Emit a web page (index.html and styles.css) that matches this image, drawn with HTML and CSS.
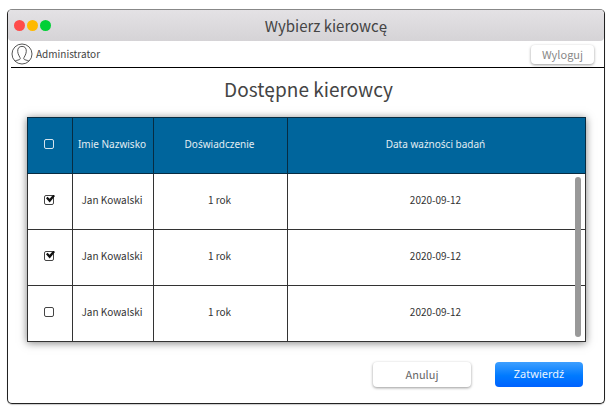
FILE: index.html
```html
<!DOCTYPE html>
<html lang="pl">
<head>
<meta charset="utf-8">
<title>Wybierz kierowcę</title>
<link rel="stylesheet" href="styles.css">
</head>
<body>
<div class="window">
  <header class="titlebar">
    <div class="lights"><span class="light red"></span><span class="light yellow"></span><span class="light green"></span></div>
    <div class="window-title">Wybierz kierowcę</div>
  </header>
  <div class="userbar">
    <div class="user">
      <svg class="avatar" viewBox="0 0 22 22" aria-hidden="true">
        <circle cx="11" cy="11" r="10"/>
        <path d="M4 18.2C5 17 9.200 17.200 9.300 15.800C9.400 14.200 6.800 12 6.700 8.300C6.600 5 8.200 3.400 11 3.400S15.400 5 15.300 8.300C15.200 12 12.600 14.200 12.700 15.800C12.800 17.200 17 17 18 18.200"/>
      </svg>
      <span>Administrator</span>
    </div>
    <button class="btn btn-small" type="button">Wyloguj</button>
  </div>
  <main>
    <h1>Dostępne kierowcy</h1>
    <div class="table-box">
      <table>
        <colgroup><col class="c-check"><col class="c-name"><col class="c-exp"><col></colgroup>
        <thead>
          <tr><th><input type="checkbox" aria-label="Zaznacz wszystkich"></th><th>Imie Nazwisko</th><th>Doświadczenie</th><th>Data ważności badań</th></tr>
        </thead>
        <tbody>
          <tr><td><input type="checkbox" aria-label="Jan Kowalski" checked></td><td>Jan Kowalski</td><td>1 rok</td><td>2020-09-12</td></tr>
          <tr><td><input type="checkbox" aria-label="Jan Kowalski" checked></td><td>Jan Kowalski</td><td>1 rok</td><td>2020-09-12</td></tr>
          <tr><td><input type="checkbox" aria-label="Jan Kowalski"></td><td>Jan Kowalski</td><td>1 rok</td><td>2020-09-12</td></tr>
        </tbody>
      </table>
      <div class="thumb"></div>
    </div>
    <div class="actions">
      <button class="btn btn-cancel" type="button">Anuluj</button>
      <button class="btn btn-primary" type="button">Zatwierdź</button>
    </div>
  </main>
</div>
</body>
</html>
```
FILE: styles.css
```css
* { box-sizing: border-box; }

body {
  margin: 0;
  padding: 9px 10px 8px 7px;
  background: #fff;
  color: #333;
  font: 10px/16px "Noto Sans CJK SC", "Noto Sans", sans-serif;
}

.window {
  border: 1px solid #222;
  border-top-color: #888;
  border-radius: 5px;
  background: #fff;
  box-shadow: 0 1px 1px #ccc;
}

.titlebar {
  display: grid;
  grid-template-columns: 1fr auto 1fr;
  align-items: center;
  height: 31px;
  padding: 0 6px;
  border-radius: 4px;
  background: linear-gradient(#e4e2e5, #d5d3d6);
}

.lights { display: flex; gap: 2px; }
.light { width: 11px; height: 11px; border-radius: 50%; }
.red { background: #ff4b4a; }
.yellow { background: #ffb900; }
.green { background: #00d036; }

.window-title { padding-left: 40px; font-size: 15px; line-height: 22px; color: #444; }

.userbar {
  display: flex;
  justify-content: space-between;
  align-items: center;
  height: 27px;
  margin-left: 3px;
  padding-right: 10px;
  border-bottom: 1px solid #000;
}

.user { display: flex; align-items: center; gap: 3px; color: #444; }
.avatar { width: 22px; height: 22px; fill: none; stroke: #555; stroke-width: 1; }

.btn {
  border: 0;
  border-radius: 4px;
  padding: 0 0 1px;
  background: #fff;
  box-shadow: 0 1px 3px rgba(0, 0, 0, 0.4);
  color: #666;
  font: inherit;
  font-size: 11px;
}

.btn-small { width: 63px; height: 19px; color: #888; }

main { padding: 7px 18px 16px 19px; }

h1 {
  margin: 0 0 14px;
  padding-left: 4px;
  font-size: 19px;
  line-height: 28px;
  font-weight: 400;
  text-align: center;
  color: #444;
}

.table-box { position: relative; box-shadow: 0 1px 8px rgba(0, 0, 0, 0.5); }

table {
  width: 100%;
  table-layout: fixed;
  border-collapse: collapse;
  background: #fff;
}

.c-check { width: 45px; }
.c-name { width: 81px; }
.c-exp { width: 134px; }

th, td {
  height: 56px;
  padding: 0 2px 4px 0;
  border: 1px solid #333;
  font-weight: 400;
  text-align: center;
  vertical-align: middle;
  white-space: nowrap;
}

th {
  border-color: #072c42;
  background: #00659c;
  color: #e2edf3;
  font-family: "Noto Sans", sans-serif;
}

input {
  appearance: none;
  position: relative;
  display: block;
  width: 10px;
  height: 10px;
  margin: 0 auto;
  border: 1px solid #444;
  border-radius: 2px;
}

th input { border-color: #d5e4ed; }

input:checked::after {
  content: "";
  position: absolute;
  left: 1px;
  top: -1px;
  width: 9px;
  height: 8px;
  background: #111;
  clip-path: polygon(0 48%, 17% 28%, 40% 52%, 82% 0, 100% 20%, 41% 100%);
}

.thumb {
  position: absolute;
  top: 60px;
  right: 5px;
  bottom: 5px;
  width: 6px;
  border-radius: 3px;
  background: #999;
}

.actions {
  display: flex;
  justify-content: flex-end;
  gap: 24px;
  margin-top: 20px;
  padding-right: 3px;
}

.btn-cancel { width: 98px; height: 25px; }

.btn-primary {
  width: 88px;
  height: 25px;
  background: linear-gradient(#3e9fff, #007aff 55%, #0062ff);
  box-shadow: none;
  color: #e8f3ff;
  font-family: "Noto Sans", sans-serif;
}
```
